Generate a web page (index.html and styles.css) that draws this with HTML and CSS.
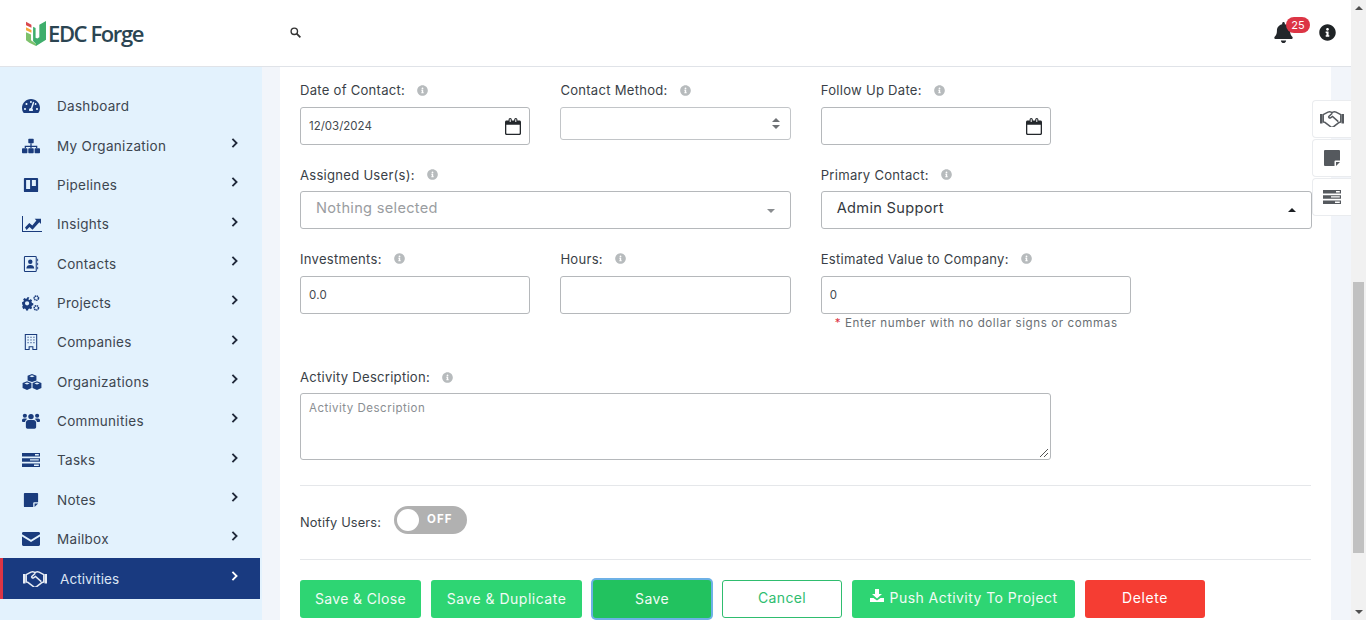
FILE: index.html
```html
<!DOCTYPE html>
<html lang="en">
<head>
<meta charset="utf-8">
<title>EDC Forge</title>
<link rel="stylesheet" href="styles.css">
</head>
<body>
<svg class="sprite" aria-hidden="true">
  <defs>
    <symbol id="i-dash" viewBox="0 0 576 512"><path d="M288 32C128.94 32 0 160.94 0 320c0 52.8 14.25 102.26 39.06 144.8 5.61 9.62 16.3 15.2 27.44 15.2h443c11.14 0 21.83-5.58 27.44-15.2C561.75 422.26 576 372.8 576 320c0-159.06-128.94-288-288-288zm0 64c14.71 0 26.58 10.13 30.32 23.65-1.11 2.26-2.64 4.23-3.49 6.67l-9.22 27.67c-5.13 3.49-10.97 6.01-17.61 6.01-17.67 0-32-14.33-32-32S270.33 96 288 96zM96 384c-17.67 0-32-14.33-32-32s14.33-32 32-32 32 14.33 32 32-14.33 32-32 32zm48-160c-17.67 0-32-14.33-32-32s14.33-32 32-32 32 14.33 32 32-14.33 32-32 32zm246.77-72.41l-61.33 184C343.13 347.33 352 364.54 352 384c0 11.72-3.38 22.55-8.88 32H232.88c-5.5-9.45-8.88-20.28-8.88-32 0-33.94 26.5-61.43 59.9-63.59l61.34-184.01c4.17-12.56 17.73-19.45 30.36-15.17 12.57 4.19 19.35 17.79 15.17 30.36zm14.66 57.2l15.52-46.55c3.47-1.29 7.13-2.23 11.05-2.23 17.67 0 32 14.33 32 32s-14.33 32-32 32c-11.38-.01-20.89-6.28-26.57-15.22zM480 384c-17.67 0-32-14.33-32-32s14.33-32 32-32 32 14.33 32 32-14.33 32-32 32z"/></symbol>
    <symbol id="i-sitemap" viewBox="0 0 20 16"><rect x="7" y="0" width="6" height="5" rx=".8"/><path d="M9.300 5h1.400v2.600H17V10.500h-1.400V9H10.700v1.500H9.300V9H4.400v1.500H3V7.600h6.300z"/><rect x="0" y="10.500" width="6" height="5.500" rx=".8"/><rect x="7" y="10.500" width="6" height="5.500" rx=".8"/><rect x="14" y="10.500" width="6" height="5.500" rx=".8"/></symbol>
    <symbol id="i-board" viewBox="-1 -1 18 18"><path fill-rule="evenodd" d="M1 0h14a1 1 0 0 1 1 1v14a1 1 0 0 1-1 1H1a1 1 0 0 1-1-1V1a1 1 0 0 1 1-1zm1.500 2.500v10h4.500v-10zm6.500 0v6.500h4.500v-6.500z"/></symbol>
    <symbol id="i-chart" viewBox="0 0 20 16"><path d="M0 0h1v15H20V16H0z"/><path d="M3 11.500l4.300-4.600 3 2.500 4.100-5-1.700-1.600H19v5.200l-1.700-1.700-6.800 7.400-3-2.600-2.900 3z"/></symbol>
    <symbol id="i-contact" viewBox="0 0 16 18"><path fill-rule="evenodd" d="M1.500 0H13a1.500 1.500 0 0 1 1.500 1.500v15A1.500 1.500 0 0 1 13 18H1.500A1.500 1.500 0 0 1 0 16.500v-15A1.500 1.500 0 0 1 1.500 0zm0 1.200a.4.4 0 0 0-.3.3v15q0 .3.3.3H13q.3 0 .3-.3v-15q0-.3-.3-.3z"/><circle cx="7.200" cy="6.400" r="2.500"/><path d="M2.800 14c0-3 1.800-4 4.400-4s4.400 1 4.400 4zM15 3h1v3h-1zM15 7.500h1v3h-1zM15 12h1v3h-1z"/></symbol>
    <symbol id="i-cogs" viewBox="0 0 20 18"><path d="M7 3.500l1.600.5 1.100-.9 1.600 1.600-.8 1.200.6 1.500 1.500.3v2.300l-1.500.3-.6 1.500.8 1.200-1.600 1.600-1.100-.9-1.600.6-.3 1.500H4.400l-.3-1.500-1.500-.6-1.200.9L0 11.800l.9-1.200-.6-1.500L0 8.800V6.500l1.400-.3.6-1.500-.9-1.200 1.600-1.600 1.200.9 1.500-.5.4-1.300h2.300zM5.600 5.400a2.400 2.400 0 1 0 0 4.800 2.400 2.400 0 0 0 0-4.800z" transform="translate(0 1.500)"/><circle cx="16" cy="3.500" r="2.400" fill="none" stroke="currentColor" stroke-width="1.800" stroke-dasharray="1.500 .6"/><circle cx="16" cy="14.500" r="2.400" fill="none" stroke="currentColor" stroke-width="1.800" stroke-dasharray="1.500 .6"/></symbol>
    <symbol id="i-building" viewBox="0 0 14 18"><path fill-rule="evenodd" d="M0 0h14v18H8.500v-3h-3v3H0zm1.200 1.200v15.600h3.100v-3h5.400v3h3.100V1.200z"/><g opacity=".75"><rect x="3" y="3" width="1.400" height="1.400"/><rect x="6.300" y="3" width="1.400" height="1.400"/><rect x="9.600" y="3" width="1.400" height="1.400"/><rect x="3" y="6" width="1.400" height="1.400"/><rect x="6.300" y="6" width="1.400" height="1.400"/><rect x="9.600" y="6" width="1.400" height="1.400"/><rect x="3" y="9" width="1.400" height="1.400"/><rect x="6.300" y="9" width="1.400" height="1.400"/><rect x="9.600" y="9" width="1.400" height="1.400"/></g></symbol>
    <symbol id="i-cubes" viewBox="0 0 21 17"><path d="M10.500 0l4.700 1.800v5l-4.700 1.800-4.700-1.800v-5zM10.500 1.300L7.700 2.300l2.800 1.100 2.800-1.100z" fill-rule="evenodd"/><path d="M5.200 7.700l4.700 1.800v5.300L5.200 17 .5 14.800V9.500zM5.200 9L2.400 10l2.800 1.100L8 10z" fill-rule="evenodd"/><path d="M15.800 7.700l4.700 1.800v5.300L15.800 17l-4.700-2.200V9.500zM15.800 9L13 10l2.800 1.100 2.800-1.100z" fill-rule="evenodd"/></symbol>
    <symbol id="i-users" viewBox="0 0 20 17"><circle cx="3.200" cy="2.700" r="2.300"/><circle cx="16.800" cy="2.700" r="2.300"/><circle cx="10" cy="3.600" r="3"/><path d="M0 7.600c0-1 1-1.800 2-1.800h2.600c.5 0 1 .2 1.300.5-1.500.8-2.300 1.700-2.500 3.200H1c-.6 0-1-.4-1-1zM20 7.600c0-1-1-1.800-2-1.800h-2.600c-.5 0-1 .2-1.300.5 1.500.8 2.300 1.700 2.500 3.200H19c.6 0 1-.4 1-1z"/><path d="M7.300 7.500h5.400c1.800 0 3 1.300 3 3v4.700c0 1-.8 1.800-1.800 1.800H6.100c-1 0-1.800-.8-1.800-1.800v-4.700c0-1.700 1.200-3 3-3z"/></symbol>
    <symbol id="i-tasks" viewBox="0 0 18 14"><path fill-rule="evenodd" d="M0 0h18v3.500H0zm13 1v1.400h3.800V1zM0 5.200h18v3.500H0zm8 1v1.400h8.800V6.200zM0 10.500h18V14H0zm12 1v1.400h4.800v-1.400z"/></symbol>
    <symbol id="i-note" viewBox="-1 -1 18 18"><path d="M1 0h14a1 1 0 0 1 1 1v9.500h-4.500a1 1 0 0 0-1 1V16H1a1 1 0 0 1-1-1V1a1 1 0 0 1 1-1z"/><path d="M12 12h4l-4 4z"/></symbol>
    <symbol id="i-mail" viewBox="0 0 18 14"><path d="M1.400 0h15.200C17.400 0 18 .6 18 1.400v.9L9 7.700 0 2.300v-.9C0 .6.600 0 1.400 0z"/><path d="M0 4.500l9 5.400 9-5.400v8.100c0 .8-.6 1.400-1.400 1.400H1.400C.6 14 0 13.400 0 12.600z"/></symbol>
    <symbol id="i-hand" viewBox="0 0 24 16"><path d="M0 3h2.500v9.500H0zM21.500 3H24v9.500h-2.500z"/><path d="M3.200 3.700L8 1.200c1-.5 2.200-.5 3.100-.1l.9.500.9-.5c.9-.4 2.100-.4 3.100.1l4.800 2.500v7.400l-1.700.3-5.500 4.300c-.9.600-2 .7-2.800.2L4.900 11.300l-1.700-.2z" fill="none" stroke="currentColor" stroke-width="1.500" stroke-linejoin="round"/><path d="M12.300 2.200L8.800 5.500c-.6.700.6 2 1.700 1.300l2-1.400 5.800 5.200" fill="none" stroke="currentColor" stroke-width="1.500"/></symbol>
    <symbol id="i-cal" viewBox="0 0 16 17"><path fill-rule="evenodd" d="M1.500 2.500H3.600V1.600a1.600 1.600 0 0 1 3.200 0v.9h2.400V1.600a1.600 1.600 0 0 1 3.200 0v.9h2.100c.8 0 1.500.7 1.500 1.500v11.500c0 .8-.7 1.500-1.500 1.500h-13C.7 17 0 16.300 0 15.500V4c0-.8.700-1.500 1.500-1.500zm-.2 4.200v8.500c0 .3.200.5.500.5h12.400c.3 0 .5-.2.500-.5V6.700zM4.700 1.200v2.700h1V1.200zm5.600 0v2.700h1V1.200z"/></symbol>
    <symbol id="i-info" viewBox="0 0 512 512"><path d="M256 8C119 8 8 119 8 256s111 248 248 248 248-111 248-248S393 8 256 8zm0 110c23.200 0 42 18.800 42 42s-18.800 42-42 42-42-18.800-42-42 18.800-42 42-42zm56 254c0 6.600-5.400 12-12 12h-88c-6.600 0-12-5.400-12-12v-24c0-6.600 5.400-12 12-12h12v-64h-12c-6.600 0-12-5.400-12-12v-24c0-6.600 5.400-12 12-12h64c6.600 0 12 5.400 12 12v100h12c6.600 0 12 5.400 12 12z"/></symbol>
    <symbol id="i-chev" viewBox="0 0 8 12"><path d="M1.500 1L6.500 6l-5 5" fill="none" stroke="currentColor" stroke-width="2.200"/></symbol>
  </defs>
</svg>

<div class="page">
  <div class="viewport">
    <header class="topbar">
      <div class="brand">
        <svg class="logo" viewBox="0 0 24 30" aria-hidden="true">
          <path d="M0 1l6.500 3.500V8L0 5z" fill="#d9484e"/>
          <path d="M0 7.500l6.500 3.200V14L0 11z" fill="#f2a93b"/>
          <path d="M0 13.500l6 2.800V23L12 27.500V30L4 26 0 23z" fill="#7dc16c"/>
          <path d="M8.500 7l3 1.500v11.500l2 1 2.500-1.500V4.500L24 0v22.500L12 30V27.500L8.500 24z" fill="#3fae6c"/>
        </svg>
        <span class="brand-name">EDC Forge</span>
      </div>
      <svg class="search" viewBox="0 0 12 12" aria-hidden="true"><circle cx="4.700" cy="4.700" r="3.500" fill="none" stroke="currentColor" stroke-width="1.500"/><path d="M7.300 7.300l4 4" stroke="currentColor" stroke-width="1.900"/></svg>
      <div class="top-actions">
        <span class="bell">
          <svg class="bell-icon" viewBox="0 0 448 512" aria-hidden="true"><path d="M224 512c35.320 0 63.970-28.650 63.970-64H160.030c0 35.350 28.650 64 63.970 64zm215.390-149.710c-19.320-20.760-55.470-51.990-55.470-154.290 0-77.700-54.480-139.900-127.940-155.160V32c0-17.670-14.320-32-31.980-32s-31.980 14.330-31.980 32v20.840C118.560 68.100 64.080 130.300 64.080 208c0 102.300-36.150 133.530-55.470 154.290-6 6.450-8.660 14.160-8.610 21.710.11 16.400 12.980 32 32.100 32h383.800c19.120 0 32-15.600 32.100-32 .05-7.550-2.610-15.270-8.610-21.710z"/></svg>
          <span class="badge">25</span>
        </span>
        <svg class="info-top"><use href="#i-info"/></svg>
      </div>
    </header>

    <div class="main">
      <nav class="sidebar">
        <a class="nav-item"><svg class="nav-icon"><use href="#i-dash"/></svg><span class="nav-label">Dashboard</span></a>
        <a class="nav-item"><svg class="nav-icon"><use href="#i-sitemap"/></svg><span class="nav-label">My Organization</span><svg class="chev"><use href="#i-chev"/></svg></a>
        <a class="nav-item"><svg class="nav-icon"><use href="#i-board"/></svg><span class="nav-label">Pipelines</span><svg class="chev"><use href="#i-chev"/></svg></a>
        <a class="nav-item"><svg class="nav-icon wide"><use href="#i-chart"/></svg><span class="nav-label">Insights</span><svg class="chev"><use href="#i-chev"/></svg></a>
        <a class="nav-item"><svg class="nav-icon"><use href="#i-contact"/></svg><span class="nav-label">Contacts</span><svg class="chev"><use href="#i-chev"/></svg></a>
        <a class="nav-item"><svg class="nav-icon"><use href="#i-cogs"/></svg><span class="nav-label">Projects</span><svg class="chev"><use href="#i-chev"/></svg></a>
        <a class="nav-item"><svg class="nav-icon"><use href="#i-building"/></svg><span class="nav-label">Companies</span><svg class="chev"><use href="#i-chev"/></svg></a>
        <a class="nav-item"><svg class="nav-icon wide"><use href="#i-cubes"/></svg><span class="nav-label">Organizations</span><svg class="chev"><use href="#i-chev"/></svg></a>
        <a class="nav-item"><svg class="nav-icon"><use href="#i-users"/></svg><span class="nav-label">Communities</span><svg class="chev"><use href="#i-chev"/></svg></a>
        <a class="nav-item"><svg class="nav-icon"><use href="#i-tasks"/></svg><span class="nav-label">Tasks</span><svg class="chev"><use href="#i-chev"/></svg></a>
        <a class="nav-item"><svg class="nav-icon"><use href="#i-note"/></svg><span class="nav-label">Notes</span><svg class="chev"><use href="#i-chev"/></svg></a>
        <a class="nav-item"><svg class="nav-icon"><use href="#i-mail"/></svg><span class="nav-label">Mailbox</span><svg class="chev"><use href="#i-chev"/></svg></a>
        <a class="nav-item active"><svg class="nav-icon"><use href="#i-hand"/></svg><span class="nav-label">Activities</span><svg class="chev"><use href="#i-chev"/></svg></a>
      </nav>

      <section class="content">
        <form class="card">
          <div class="row">
            <div class="field span3"><label class="label">Date of Contact:<svg class="tip"><use href="#i-info"/></svg></label><div class="control date">12/03/2024<svg class="cal"><use href="#i-cal"/></svg></div></div>
            <div class="field span3"><label class="label">Contact Method:<svg class="tip"><use href="#i-info"/></svg></label><div class="control short"><span class="updown"><i class="tri up"></i><i class="tri down"></i></span></div></div>
            <div class="field span3"><label class="label">Follow Up Date:<svg class="tip"><use href="#i-info"/></svg></label><div class="control"><svg class="cal"><use href="#i-cal"/></svg></div></div>
          </div>
          <div class="row">
            <div class="field span6"><label class="label">Assigned User(s):<svg class="tip"><use href="#i-info"/></svg></label><div class="control picker muted">Nothing selected<i class="tri down caret-muted"></i></div></div>
            <div class="field span6"><label class="label">Primary Contact:<svg class="tip"><use href="#i-info"/></svg></label><div class="control picker strong">Admin Support<i class="tri up caret-dark"></i></div></div>
          </div>
          <div class="row">
            <div class="field span3"><label class="label">Investments:<svg class="tip"><use href="#i-info"/></svg></label><div class="control">0.0</div></div>
            <div class="field span3"><label class="label">Hours:<svg class="tip"><use href="#i-info"/></svg></label><div class="control"></div></div>
            <div class="field span-value"><label class="label">Estimated Value to Company:<svg class="tip"><use href="#i-info"/></svg></label><div class="control">0</div><p class="hint"><span class="star">*</span> Enter number with no dollar signs or commas</p></div>
          </div>
          <div class="row desc-row">
            <div class="field span9"><label class="label">Activity Description:<svg class="tip"><use href="#i-info"/></svg></label><div class="control area">Activity Description<svg class="grip" viewBox="0 0 10 10"><path d="M9 1L1 9M9 5L5 9" stroke="#555" stroke-width="1"/></svg></div></div>
          </div>
          <hr class="rule first-rule">
          <div class="notify">
            <span class="notify-label">Notify Users:</span>
            <span class="toggle"><i class="knob"></i><b class="toggle-text">OFF</b></span>
          </div>
          <hr class="rule second-rule">
          <div class="actions">
            <button type="button" class="btn green lift w-close">Save &amp; Close</button>
            <button type="button" class="btn green lift w-dup">Save &amp; Duplicate</button>
            <button type="button" class="btn green lift focus w-save">Save</button>
            <button type="button" class="btn outline w-cancel">Cancel</button>
            <button type="button" class="btn green w-push"><svg class="dl" viewBox="0 0 14 13"><path d="M5 0h4v5h3L7 9.500 2 5h3z"/><path d="M0 9h3.500L7 11.500 10.500 9H14v4H0z"/></svg>Push Activity To Project</button>
            <button type="button" class="btn red w-del">Delete</button>
          </div>
        </form>
      </section>
    </div>

    <aside class="float-tabs">
      <span class="tab"><svg class="tab-hand"><use href="#i-hand"/></svg></span>
      <span class="tab"><svg class="tab-note"><use href="#i-note"/></svg></span>
      <span class="tab"><svg class="tab-tasks"><use href="#i-tasks"/></svg></span>
    </aside>
  </div>
  <div class="scrollbar">
    <i class="tri up sb-up"></i>
    <div class="sb-track"><div class="sb-thumb"></div></div>
    <i class="tri down sb-down"></i>
  </div>
</div>
</body>
</html>
```

FILE: styles.css
```css
* { box-sizing: border-box; }
html, body { margin: 0; padding: 0; height: 620px; overflow: hidden; }
body { font-family: Inter, "Liberation Sans", sans-serif; color: #3a3f47; background: #fff; }
.sprite { position: absolute; width: 0; height: 0; }
i { display: block; }

.page { display: flex; width: 1366px; height: 620px; }
.viewport { position: relative; width: 1351px; display: flex; flex-direction: column; }

.topbar { height: 67px; flex: none; display: flex; align-items: center; background: #fff; border-bottom: 1px solid #e0e3e8; padding: 0 15px 0 26px; }
.brand { display: flex; align-items: center; width: 264px; gap: 2px; }
.logo { width: 20px; height: 25px; }
.brand-name { font-family: "Open Sans", sans-serif; font-weight: 600; font-size: 22px; letter-spacing: -1.4px; color: #2b4552; }
.search { width: 11px; height: 11px; color: #333; margin-top: -2px; }
.top-actions { margin-left: auto; display: flex; align-items: center; gap: 26px; margin-top: -2px; }
.bell { position: relative; display: block; width: 19px; height: 21px; }
.bell-icon { display: block; width: 19px; height: 21px; fill: #23272b; }
.badge { position: absolute; left: 12px; top: -5px; width: 24px; height: 16px; border-radius: 8px; background: #dc3545; color: #fff; font-size: 11px; line-height: 16px; text-align: center; }
.info-top { width: 17px; height: 17px; fill: #1f2326; }

.main { flex: 1; display: flex; min-height: 0; background: #f2f5fa; }
.sidebar { width: 262px; flex: none; background: #e3f2fd; padding-top: 19.800px; }
.nav-item { display: flex; align-items: center; height: 39.330px; width: 260px; color: #3d4650; font-size: 13.500px; position: relative; }
.nav-icon { width: 18px; height: 16px; margin-left: 22px; color: #1a3c7d; fill: #1a3c7d; flex: none; }
.nav-icon.wide { width: 20px; margin-right: -2px; }
.nav-label { margin-left: 17px; letter-spacing: .3px; }
.chev { position: absolute; left: 231px; top: 12px; width: 7px; height: 10px; color: #20293a; }
.nav-item.active { height: 41px; margin-top: -.800px; padding-top: 2px; background: #193a80; border-left: 3px solid #dc3545; color: #dbe4f3; }
.nav-item.active .nav-icon { width: 24px; margin-left: 20px; color: #e8edf5; fill: #e8edf5; }
.nav-item.active .nav-label { margin-left: 13px; letter-spacing: .1px; }
.nav-item.active .chev { color: #fff; left: 228px; top: 13px; }

.content { flex: 1; padding: 0 20px 0 18px; min-width: 0; }
.card { background: #fff; height: 553px; overflow: hidden; padding: 13.200px 19.500px 0 20px; }
.row { display: grid; grid-template-columns: repeat(12, 1fr); column-gap: 30px; margin-bottom: 19.600px; }
.span3 { grid-column: span 3; }
.span6 { grid-column: span 6; }
.span9 { grid-column: span 9; }
.span-value { grid-column: span 6; }
.label { display: flex; align-items: center; height: 20px; margin-bottom: 6.800px; font-size: 13.100px; color: #3a3f47; letter-spacing: .25px; }
.tip { width: 11px; height: 11px; margin-left: 12px; fill: #b7bbbd; }
.control { position: relative; height: 38px; border: 1px solid #b5b8bb; border-radius: 3px; background: #fff; padding: 0 8px; display: flex; align-items: center; font-size: 11.500px; color: #444a50; letter-spacing: .3px; }
.control.date { letter-spacing: 0; }
.control.short { height: 33px; border-color: #c2c5c8; }
.cal { position: absolute; right: 8px; top: 10px; width: 16px; height: 17px; fill: #23272b; }
.updown { position: absolute; right: 10px; top: 10px; display: flex; flex-direction: column; gap: 3px; }
.tri { width: 0; height: 0; border-left: 4px solid transparent; border-right: 4px solid transparent; }
.tri.up { border-bottom: 4px solid #6e7175; }
.tri.down { border-top: 4px solid #6e7175; }
.picker { padding: 0 0 5px 15px; font-size: 14.600px; letter-spacing: .3px; }
.picker.muted { color: #9a9da1; }
.picker.strong { color: #33383d; }
.caret-muted { position: absolute; right: 15px; top: 17px; border-top-color: #8a8d90 !important; }
.caret-dark { position: absolute; right: 15px; top: 16px; border-bottom-color: #1d2024 !important; }
.span-value .control { width: 310px; }
.hint { margin: 2px 0 0 14px; font-size: 11.600px; line-height: 14px; color: #6a6f74; letter-spacing: .58px; }
.star { color: #dc3545; }

.desc-row { margin-top: 37.300px; margin-bottom: 0; }
.desc-row .label { margin-bottom: 6px; }
.area { height: 67px; align-items: flex-start; padding-top: 7px; color: #8a8e92; letter-spacing: .5px; }
.grip { position: absolute; right: 1px; bottom: 1px; width: 10px; height: 10px; }

.rule { border: 0; border-top: 1px solid #e5e7ea; margin: 0; margin-right: 1px; }
.first-rule { margin-top: 25px; }
.notify { display: flex; align-items: center; height: 28px; margin-top: 20px; }
.notify-label { font-size: 12.800px; color: #3a3f47; letter-spacing: .15px; margin-top: 4px; }
.toggle { position: relative; margin-left: 13px; width: 73px; height: 28px; border-radius: 14px; background: #b1b1b1; }
.knob { position: absolute; left: 3px; top: 3px; width: 22px; height: 22px; border-radius: 50%; background: #fff; }
.toggle-text { position: absolute; left: 33px; top: 6px; font-size: 11.500px; line-height: 14px; color: #fff; letter-spacing: 1px; font-weight: 700; }
.second-rule { margin-top: 25px; }

.actions { display: flex; gap: 10px; margin-top: 20px; align-items: flex-start; }
.btn { height: 38px; border: 1px solid transparent; border-radius: 3px; font-family: inherit; font-size: 14px; letter-spacing: .35px; padding: 0 0 4px; display: flex; align-items: center; justify-content: center; flex: none; }
.btn.lift { padding-bottom: 2px; }
.green { background: #2ed573; color: #f1fbf5; }
.red { background: #f53d33; color: #fff; }
.outline { background: #fff; color: #2fbd6f; border-color: #2fbd6f; }
.focus { background: #22c25f; box-shadow: 0 0 0 2px #6db1e6; margin: 0 1px; }
.w-close { width: 121px; }
.w-dup { width: 151px; letter-spacing: .5px; }
.w-save { width: 118px; }
.w-cancel { width: 120px; }
.w-push { width: 223px; letter-spacing: .45px; }
.w-del { width: 120px; letter-spacing: .6px; }
.dl { width: 14px; height: 13px; fill: #fff; margin-right: 6px; margin-top: -4px; }

.float-tabs { position: absolute; right: 0; top: 100px; display: flex; flex-direction: column; gap: 1.500px; }
.tab { display: flex; align-items: center; justify-content: center; width: 39px; height: 37.500px; background: #fff; border: 1px solid #eaecef; border-right: 0; border-radius: 4px 0 0 4px; color: #55595e; fill: #55595e; }
.tab-hand { width: 24px; height: 16px; }
.tab-note { width: 18px; height: 18px; }
.tab-tasks { width: 18px; height: 14px; }

.scrollbar { width: 15px; height: 620px; background: #f1f1f1; display: flex; flex-direction: column; align-items: center; }
.sb-up { margin-top: 6px; border-bottom-color: #505050 !important; }
.sb-down { margin-bottom: 6px; border-top-color: #505050 !important; }
.sb-track { flex: 1; width: 100%; padding: 272px 2px 0; }
.sb-thumb { height: 271px; background: #c1c1c1; }
```
